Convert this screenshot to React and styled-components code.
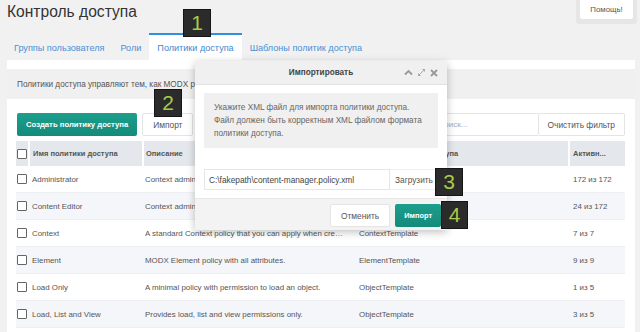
import React from "react";
import styled, { createGlobalStyle } from "styled-components";

const GlobalStyle = createGlobalStyle`
  html, body {
    margin: 0;
    padding: 0;
    background: #f1f1f1;
    font-family: "Liberation Sans", Arial, sans-serif;
    color: #555;
  }
  * { box-sizing: border-box; }
`;

const Page = styled.div`
  position: relative;
  width: 640px;
  height: 332px;
  overflow: hidden;
`;

const Header = styled.div`
  display: flex;
  justify-content: space-between;
  align-items: flex-start;
  height: 33px;
  padding-left: 7px;
  padding-right: 3px;
`;

const Title = styled.h1`
  margin: 3px 0 0;
  font-size: 15.6px;
  font-weight: normal;
  color: #333;
`;

const HelpFrame = styled.div`
  background: #e6e6e6;
  padding: 0 4px 5px 4px;
  border-radius: 0 0 3px 3px;
`;

const HelpButton = styled.div`
  width: 53px;
  height: 19px;
  background: #fff;
  font-size: 7.8px;
  color: #555;
  display: flex;
  align-items: center;
  justify-content: center;
  border-radius: 0 0 2px 2px;
`;

const Tabs = styled.div`
  display: flex;
  height: 27px;
  padding-left: 6px;
`;

const Tab = styled.div`
  display: flex;
  align-items: center;
  padding: 0 8px;
  font-size: 9.1px;
  color: ${(p) => (p.$active ? "#3e8ad0" : "#4a90d4")};
  background: ${(p) => (p.$active ? "#fff" : "transparent")};
  border-top: 2px solid ${(p) => (p.$active ? "#2f8fe0" : "transparent")};
`;

const Panel = styled.div`
  background: #fff;
  margin: 0 5px 0 7px;
  padding-top: 9px;
  height: 280px;
`;

const Intro = styled.div`
  background: #f0f0f0;
  height: 30px;
  display: flex;
  align-items: center;
  padding-left: 10px;
  font-size: 8.2px;
  color: #555;
`;

const Content = styled.div`
  padding: 14px 10px 0 9px;
`;

const Toolbar = styled.div`
  display: flex;
  align-items: stretch;
  height: 23px;
  margin-bottom: 5px;
`;

const GreenButton = styled.div`
  display: flex;
  align-items: center;
  justify-content: center;
  padding: 0 ${(p) => p.$pad || 10}px;
  margin-left: ${(p) => p.$ml || 0}px;
  background: linear-gradient(#1d9f8d, #148a7a);
  color: #fff;
  font-size: ${(p) => (p.$small ? 7.4 : 7.7)}px;
  font-weight: bold;
  border-radius: 2px;
  white-space: nowrap;
`;

const PlainButton = styled.div`
  display: flex;
  align-items: center;
  justify-content: center;
  padding: 0 ${(p) => p.$pad || 10}px;
  margin-left: ${(p) => p.$ml || 0}px;
  background: #fff;
  border: 1px solid #e4e4e4;
  color: #555;
  font-size: 8.4px;
  border-radius: 2px;
  white-space: nowrap;
`;

const Spacer = styled.div`
  flex: 1;
`;

const Search = styled.div`
  width: 106px;
  border: 1px solid #e4e4e4;
  border-right: none;
  display: flex;
  align-items: center;
  padding-left: 6px;
  font-size: 8px;
  color: #aaa;
  border-radius: 2px 0 0 2px;
`;

const Grid = styled.div`
  display: grid;
  grid-template-columns: 12px 114px 212px 214px 57px;
`;

const HeadCell = styled.div`
  height: 25px;
  background: #e4e8ed;
  display: flex;
  align-items: center;
  padding-left: ${(p) => p.$pl ?? 4}px;
  font-size: 7.5px;
  font-weight: bold;
  color: #555;
  border-left: ${(p) => (p.$first ? "none" : "2px solid #fff")};
  white-space: nowrap;
  overflow: hidden;
`;

const Cell = styled.div`
  height: 27px;
  display: flex;
  align-items: center;
  padding-left: ${(p) => p.$pl ?? 4}px;
  padding-right: 8px;
  font-size: 7.9px;
  color: #555;
  background: ${(p) => (p.$odd ? "#f5f6f9" : "#fff")};
  border-bottom: 1px solid #eef0f3;
  white-space: nowrap;
  overflow: hidden;
  span {
    overflow: hidden;
    text-overflow: ellipsis;
  }
`;

const Check = styled.div`
  width: 10px;
  height: 10px;
  border: 1px solid #666;
  border-radius: 1px;
  background: #fff;
  flex: none;
`;

const Modal = styled.div`
  position: absolute;
  left: 195px;
  top: 61px;
  width: 252px;
  background: #fff;
  box-shadow: 0 2px 8px rgba(0, 0, 0, 0.25);
`;

const ModalHeader = styled.div`
  position: relative;
  height: 24px;
  background: #f0f0f0;
  border-bottom: 1px solid #e2e2e2;
  display: flex;
  align-items: center;
  justify-content: center;
  font-size: 8.2px;
  font-weight: bold;
  color: #444;
`;

const ModalTools = styled.div`
  position: absolute;
  right: 9px;
  top: 7px;
  display: flex;
  gap: 4px;
  align-items: center;
`;

const ModalBody = styled.div`
  padding: 8px 9px 8px 9px;
`;

const Info = styled.div`
  background: #f0f0f0;
  padding: 8px 6px 8px 10px;
  height: 55px;
  font-size: 8.2px;
  line-height: 13px;
  color: #666;
  white-space: nowrap;
`;

const FileRow = styled.div`
  display: flex;
  height: 21px;
  margin-top: 21px;
`;

const FileInput = styled.div`
  flex: 1;
  border: 1px solid #e6e6e6;
  display: flex;
  align-items: center;
  padding-left: 4px;
  font-size: 8.3px;
  color: #444;
`;

const UploadButton = styled.div`
  width: 48px;
  display: flex;
  align-items: center;
  padding-left: 5px;
  font-size: 8.3px;
  color: #555;
  background: #fff;
  border: 1px solid #eee;
  border-left: none;
`;

const ModalFooter = styled.div`
  background: #f3f3f3;
  border-top: 1px solid #e8e8e8;
  height: 32px;
  display: flex;
  justify-content: flex-end;
  align-items: stretch;
  padding: 5px 6px 3px 0;
`;

const Badge = styled.div`
  position: absolute;
  left: ${(p) => p.$x}px;
  top: ${(p) => p.$y}px;
  width: ${(p) => p.$w || 28}px;
  height: 28px;
  background: #2b2b2b;
  border: 1px solid #151515;
  color: #a9c94a;
  font-size: 21px;
  display: flex;
  align-items: center;
  justify-content: center;
  font-family: "Liberation Sans", Arial, sans-serif;
`;

const rows = [
  ["Administrator", "Context administration policy with all permissions.", "AdministratorTemplate", "172 из 172"],
  ["Content Editor", "Context administration policy with limited, content-editing related permissions.", "AdministratorTemplate", "24 из 172"],
  ["Context", "A standard Context policy that you can apply when creating Context ACLs for basic read/write and view_unpublished access within a Context.", "ContextTemplate", "7 из 7"],
  ["Element", "MODX Element policy with all attributes.", "ElementTemplate", "9 из 9"],
  ["Load Only", "A minimal policy with permission to load an object.", "ObjectTemplate", "1 из 5"],
  ["Load, List and View", "Provides load, list and view permissions only.", "ObjectTemplate", "3 из 5"],
];

function ToolIcons() {
  return (
    <ModalTools>
      <svg width="9" height="7" viewBox="0 0 9 7">
        <path d="M1 5.5 L4.5 2 L8 5.5" fill="none" stroke="#999" strokeWidth="1.8" />
      </svg>
      <svg width="9" height="9" viewBox="0 0 9 9">
        <path d="M1.5 7.5 L7.5 1.5" stroke="#aaa" strokeWidth="1" />
        <path d="M5 1 H8 V4 Z" fill="#aaa" />
        <path d="M1 5 V8 H4 Z" fill="#aaa" />
      </svg>
      <svg width="8" height="8" viewBox="0 0 8 8">
        <path d="M1 1 L7 7 M7 1 L1 7" stroke="#999" strokeWidth="1.8" />
      </svg>
    </ModalTools>
  );
}

export default function App() {
  return (
    <Page>
      <GlobalStyle />
      <Header>
        <Title>Контроль доступа</Title>
        <HelpFrame>
          <HelpButton>Помощь!</HelpButton>
        </HelpFrame>
      </Header>
      <Tabs>
        <Tab>Группы пользователя</Tab>
        <Tab>Роли</Tab>
        <Tab $active>Политики доступа</Tab>
        <Tab>Шаблоны политик доступа</Tab>
      </Tabs>
      <Panel>
        <Intro>
          Политики доступа управляют тем, как MODX разрешает или запрещает доступ к ресурсам.
        </Intro>
        <Content>
          <Toolbar>
            <GreenButton $ml={1} $pad={9}>Создать политику доступа</GreenButton>
            <PlainButton $ml={5} $pad={10}>Импорт</PlainButton>
            <PlainButton $ml={5}>Удалить</PlainButton>
            <Spacer />
            <Search>Поиск...</Search>
            <PlainButton $pad={9}>Очистить фильтр</PlainButton>
          </Toolbar>
          <Grid>
            <HeadCell $first $pl={1}>
              <Check />
            </HeadCell>
            <HeadCell $pl={3}>Имя политики доступа</HeadCell>
            <HeadCell $pl={2}>Описание</HeadCell>
            <HeadCell $pl={3}>Шаблон политики доступа</HeadCell>
            <HeadCell $pl={3}>Активн...</HeadCell>
            {rows.map((r, i) => (
              <React.Fragment key={r[0]}>
                <Cell $odd={i % 2 === 1} $pl={1}>
                  <Check />
                </Cell>
                <Cell $odd={i % 2 === 1}>{r[0]}</Cell>
                <Cell $odd={i % 2 === 1} $pl={3}>
                  <span>{r[1]}</span>
                </Cell>
                <Cell $odd={i % 2 === 1} $pl={5}>{r[2]}</Cell>
                <Cell $odd={i % 2 === 1} $pl={5}>{r[3]}</Cell>
              </React.Fragment>
            ))}
          </Grid>
        </Content>
      </Panel>

      <Modal>
        <ModalHeader>
          Импортировать
          <ToolIcons />
        </ModalHeader>
        <ModalBody>
          <Info>
            Укажите XML файл для импорта политики доступа.
            <br />
            Файл должен быть корректным XML файлом формата
            <br />
            политики доступа.
          </Info>
          <FileRow>
            <FileInput>C:\fakepath\content-manager.policy.xml</FileInput>
            <UploadButton>Загрузить</UploadButton>
          </FileRow>
        </ModalBody>
        <ModalFooter>
          <PlainButton $pad={10}>Отменить</PlainButton>
          <GreenButton $ml={5} $pad={9} $small>
            Импорт
          </GreenButton>
        </ModalFooter>
      </Modal>

      <Badge $x={183} $y={9}>1</Badge>
      <Badge $x={154} $y={89}>2</Badge>
      <Badge $x={435} $y={168}>3</Badge>
      <Badge $x={441} $y={201} $w={27}>4</Badge>
    </Page>
  );
}
